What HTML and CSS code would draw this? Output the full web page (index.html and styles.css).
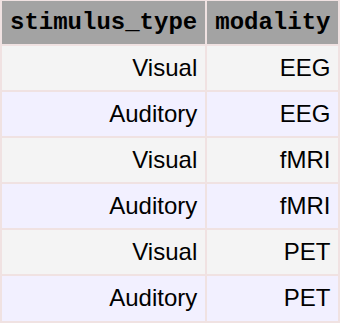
FILE: index.html
```html
<!DOCTYPE html>
<html>
<head>
<meta charset="utf-8">
<link rel="stylesheet" href="styles.css">
</head>
<body>
<table class="data">
  <thead>
    <tr><th>stimulus_type</th><th>modality</th></tr>
  </thead>
  <tbody>
    <tr class="odd"><td>Visual</td><td>EEG</td></tr>
    <tr class="even"><td>Auditory</td><td>EEG</td></tr>
    <tr class="odd"><td>Visual</td><td>fMRI</td></tr>
    <tr class="even"><td>Auditory</td><td>fMRI</td></tr>
    <tr class="odd"><td>Visual</td><td>PET</td></tr>
    <tr class="even"><td>Auditory</td><td>PET</td></tr>
  </tbody>
</table>
</body>
</html>
```
FILE: styles.css
```css
html, body {
  margin: 0;
  padding: 0;
  background: #ffffff;
}
.data {
  border-collapse: collapse;
  width: 340px;
  font-family: "Liberation Sans", Arial, sans-serif;
  font-size: 24px;
  color: #000;
}
.data th, .data td {
  border: 2px solid #f0e2e2;
  padding: 0 8px;
  line-height: 28px;
}
.data th {
  background: #a3a3a3;
  font-family: "Courier New", "Liberation Mono", monospace;
  font-weight: bold;
  text-align: left;
  border-top-width: 1px;
  height: 43px;
  padding-top: 8px;
  padding-bottom: 7px;
  box-sizing: border-box;
}
.data td {
  text-align: right;
  padding-top: 8px;
  padding-bottom: 8px;
}
.data tbody tr:last-child td { padding-bottom: 9px; }
.data tr.odd td { background: #f4f4f4; }
.data tr.even td { background: #f2f0ff; }
```
